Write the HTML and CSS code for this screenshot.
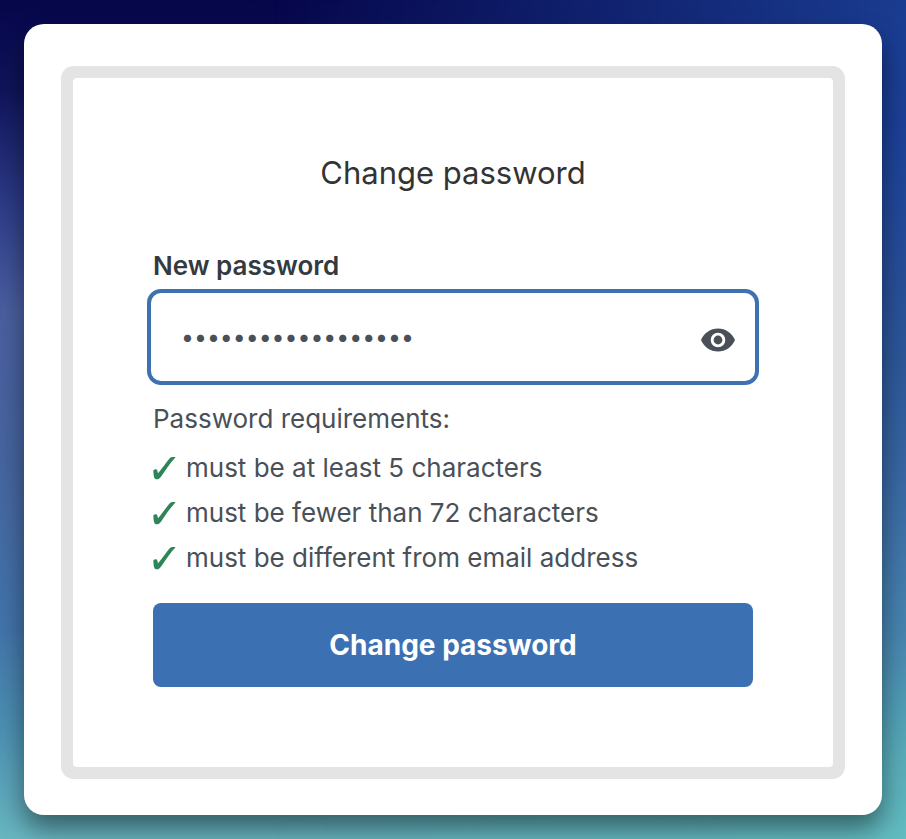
FILE: index.html
```html
<!DOCTYPE html>
<html lang="en">
<head>
    <meta charset="UTF-8">
    <meta name="viewport" content="width=device-width, initial-scale=1.0">
    <title>Change password</title>
    <link rel="stylesheet" href="styles.css">
</head>
<body>
    <main class="window">
        <form class="panel" id="passwordForm">
            <h1>Change password</h1>
            <label for="newPassword">New password</label>
            <div class="password-field">
                <input type="password" id="newPassword" value="correcthorsebatter" autocomplete="new-password">
                <button type="button" class="toggle" id="toggleBtn" aria-label="Show password">
                    <svg viewBox="0 0 34 24" width="34" height="24" aria-hidden="true">
                        <path fill="currentColor" fill-rule="evenodd" d="M17 0.5C9.5 0.5 3 5 0 12c3 7 9.5 11.5 17 11.5S31 19 34 12C31 5 24.5 0.5 17 0.5zM17 4.7a7.3 7.3 0 1 1 0 14.600a7.3 7.3 0 1 1 0-14.600zM17 7.600a4.400 4.400 0 1 0 0 8.800a4.400 4.400 0 1 0 0-8.800z"/>
                    </svg>
                </button>
            </div>
            <p class="requirements-title">Password requirements:</p>
            <ul class="requirements">
                <li>
                    <svg class="check" viewBox="0 0 24 24" aria-hidden="true"><path d="M0.3 14.600C1.600 13 3.800 12.800 4.300 14.500L5 17.300C9.500 12 13.500 6 16.500 2.500C17.800 1 20 0.800 22.600 1.200C17.500 6.500 12.500 14 8 20.800C6.300 23.200 3.800 24 2 22.800C0.800 22 0.500 18 0.3 14.600z"/></svg>
                    must be at least 5 characters
                </li>
                <li>
                    <svg class="check" viewBox="0 0 24 24" aria-hidden="true"><path d="M0.3 14.600C1.600 13 3.800 12.800 4.300 14.500L5 17.300C9.500 12 13.500 6 16.500 2.500C17.800 1 20 0.800 22.600 1.200C17.500 6.500 12.500 14 8 20.800C6.300 23.200 3.800 24 2 22.800C0.800 22 0.500 18 0.3 14.600z"/></svg>
                    must be fewer than 72 characters
                </li>
                <li>
                    <svg class="check" viewBox="0 0 24 24" aria-hidden="true"><path d="M0.3 14.600C1.600 13 3.800 12.800 4.300 14.500L5 17.300C9.500 12 13.500 6 16.500 2.500C17.800 1 20 0.800 22.600 1.200C17.500 6.500 12.500 14 8 20.800C6.300 23.200 3.800 24 2 22.800C0.800 22 0.500 18 0.3 14.600z"/></svg>
                    must be different from email address
                </li>
            </ul>
            <button type="submit" class="submit">Change password</button>
        </form>
    </main>

    <script>
        const input = document.getElementById('newPassword');
        document.getElementById('toggleBtn').addEventListener('click', function() {
            input.type = input.type === 'password' ? 'text' : 'password';
        });
        document.getElementById('passwordForm').addEventListener('submit', function(e) {
            e.preventDefault();
        });
    </script>
</body>
</html>
```

FILE: styles.css
```css
* {
    box-sizing: border-box;
}
body {
    position: relative;
    font-family: Inter, Roboto, sans-serif;
    font-size: 26px;
    color: #495057;
    margin: 0;
    padding: 24px;
    min-height: 100vh;
    background: linear-gradient(#06054a 0%, #10155c 11%, #2c3a86 24%, #4a5fa0 37%, #46659f 55%, #4274aa 75%, #4c90b2 87%, #68b6c0 100%);
}
/* right side of the backdrop, faded in over the left one */
body::before {
    content: "";
    position: absolute;
    inset: 0;
    background: linear-gradient(#1a3c90 0%, #1c4098 15%, #2c5698 42%, #3866a4 56%, #4886b0 76%, #58acb8 90%, #62bcc0 100%);
    -webkit-mask-image: linear-gradient(to right, transparent 30%, black 100%);
    mask-image: linear-gradient(to right, transparent 30%, black 100%);
}
.window {
    position: relative;
    background: white;
    padding: 54px 49px 48px;
    border-radius: 20px;
    box-shadow: 0 14px 26px rgba(0, 0, 0, 0.45);
}
.panel {
    padding: 72px 80px 80px;
    border-radius: 4px;
    box-shadow: 0 0 0 12px #e4e4e4;
}
h1 {
    color: #333;
    font-size: 31px;
    font-weight: 400;
    line-height: 46px;
    text-align: center;
    margin: 0 0 52px;
}
label {
    display: block;
    color: #343a40;
    font-weight: 600;
    line-height: 36px;
    margin-bottom: 5px;
}
.password-field {
    display: flex;
    align-items: center;
    height: 96px;
    margin: 0 -6px 14px;
    padding: 0 20px 0 30px;
    border: 4px solid #3f71b0;
    border-radius: 14px;
}
.password-field input {
    flex: 1;
    min-width: 0;
    padding: 0;
    border: none;
    outline: none;
    background: none;
    color: #495057;
    font-family: inherit;
    font-size: 23px;
}
.toggle {
    display: flex;
    padding: 6px 0 0;
    border: none;
    background: none;
    color: #495057;
    cursor: pointer;
}
.requirements-title {
    line-height: 40px;
    margin: 0 0 6px;
}
.requirements {
    list-style: none;
    line-height: 45px;
    margin: 0 0 23px;
    padding: 0;
}
.requirements li {
    display: flex;
    align-items: center;
    gap: 9px;
}
.check {
    width: 24px;
    height: 26px;
    fill: #2f855a;
}
.submit {
    display: block;
    width: 100%;
    height: 84px;
    background-color: #3b71b3;
    color: white;
    border: none;
    border-radius: 8px;
    cursor: pointer;
    font-family: inherit;
    font-size: 28px;
    font-weight: 700;
}
.submit:hover {
    background-color: #33639e;
}
```
